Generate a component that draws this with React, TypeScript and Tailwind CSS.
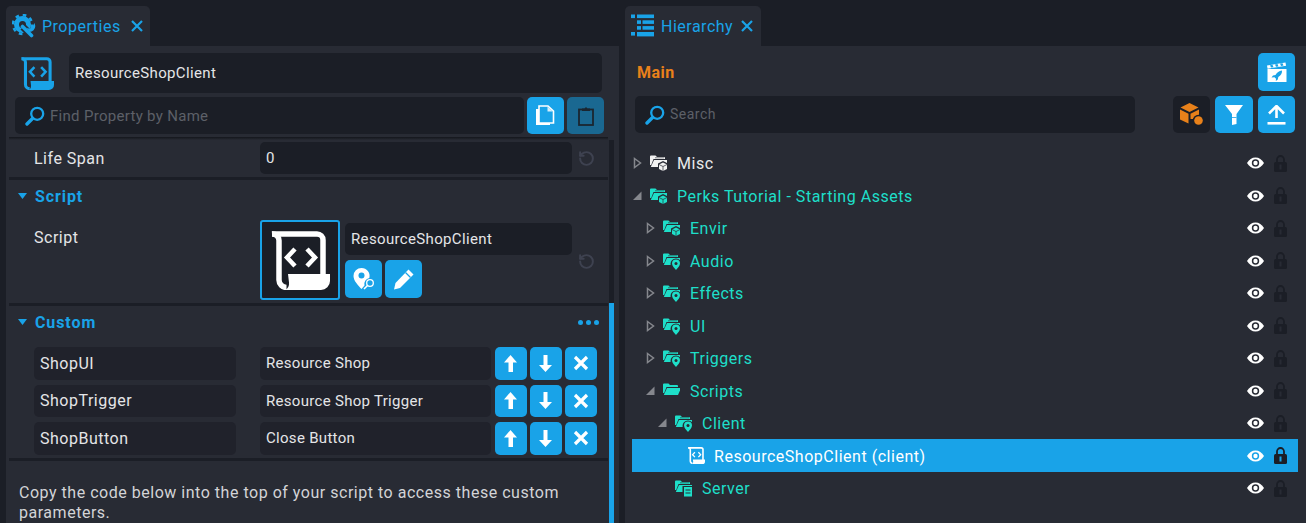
import { RotateCcw } from 'lucide-react';

const panel = '#282b34';

function GearWrench() {
  return (
    <svg width="24" height="24" viewBox="0 0 24 24" className="shrink-0">
      <circle cx="10.5" cy="10.5" r="6" fill="none" stroke="#19a3e8" strokeWidth="5" />
      <circle cx="10.5" cy="10.5" r="9.5" fill="none" stroke="#19a3e8" strokeWidth="2.6" strokeDasharray="3.6 3.85" />
      <path d="M11 13L20 22" stroke={panel} strokeWidth="7" />
      <path d="M10.5 12.5L19.5 21.5" stroke="#19a3e8" strokeWidth="3.6" strokeLinecap="round" />
      <path d="M14.5 13.5a4.5 4.5 0 0 0 6-1l2-3.5.8 3a6 6 0 0 1-6 6z" fill="#19a3e8" />
    </svg>
  );
}

function HierarchyIcon() {
  return (
    <svg width="24" height="24" viewBox="0 0 24 24" className="shrink-0" fill="#19a3e8">
      <rect x="0" y="0.5" width="4" height="3.6" />
      <rect x="6" y="0.5" width="17" height="3.6" />
      <rect x="6" y="6.3" width="4" height="3.6" />
      <rect x="11.5" y="6.3" width="11.5" height="3.6" />
      <rect x="6" y="12.1" width="4" height="3.6" />
      <rect x="11.5" y="12.1" width="11.5" height="3.6" />
      <rect x="0" y="18" width="4" height="3.6" />
      <rect x="6" y="18" width="17" height="4.4" />
    </svg>
  );
}

function CloseGlyph() {
  return (
    <svg width="12" height="12" viewBox="0 0 12 12" className="shrink-0">
      <path d="M1 1L11 11M11 1L1 11" stroke="#19a3e8" strokeWidth="2.2" />
    </svg>
  );
}

function Magnifier() {
  return (
    <svg width="20" height="20" viewBox="0 0 20 20" className="shrink-0">
      <circle cx="12.2" cy="7.8" r="6" fill="none" stroke="#19a3e8" strokeWidth="2.3" />
      <path d="M7.5 12.5L2 18" stroke="#19a3e8" strokeWidth="3.4" strokeLinecap="round" />
    </svg>
  );
}

function ScrollIcon({ size, color }: { size: number; color: string }) {
  return (
    <svg width={size} height={size} viewBox="0 0 59 59" className="shrink-0">
      <path d="M1 3H46a6 6 0 0 1 6 6V46" fill="none" stroke={color} strokeWidth="5.5" />
      <path d="M1 3a6.5 6.5 0 0 1 7 6.5V49a7.500 7.500 0 0 0 7.500 7.500" fill="none" stroke={color} strokeWidth="5.5" />
      <path d="M17 43H59V50a9 9 0 0 1-9 9H14a7.500 7.500 0 0 0 4-7.500z" fill={color} />
      <path d="M24 18L16 26.500L24 35M36 18L44 26.500L36 35" fill="none" stroke={color} strokeWidth="4.500" />
    </svg>
  );
}

function CopyIcon() {
  return (
    <svg width="19" height="22" viewBox="0 0 19 22">
      <path d="M0 4H3V18H14V20H0z" fill="#fff" />
      <path d="M3 1H12L17.500 6V18H3z" fill="#19a3e8" stroke="#fff" strokeWidth="1.600" />
      <path d="M11.500 1.500V6.500H17z" fill="#d6effb" />
    </svg>
  );
}

function ClipboardIcon() {
  return (
    <svg width="16" height="20" viewBox="0 0 16 20">
      <rect x="1" y="3.500" width="14" height="15.500" fill="none" stroke="#1b2630" strokeWidth="1.800" />
      <path d="M4 5V2.500H6.500L8 1l1.500 1.500H12V5z" fill="#1b2630" />
    </svg>
  );
}

function PinSearch() {
  return (
    <svg width="24" height="24" viewBox="0 0 24 24">
      <path d="M9.500 1A8 8 0 0 0 1.500 9c0 5 5 9.500 8 13 1-1.200 2-2.300 3-3.500a6 6 0 0 1 4.800-7.500A8 8 0 0 0 9.500 1z" fill="#fff" />
      <circle cx="9.500" cy="8.500" r="3" fill="#19a3e8" />
      <circle cx="18" cy="16" r="3.300" fill="none" stroke="#fff" strokeWidth="1.300" />
      <path d="M15.500 18.500L12 22" stroke="#fff" strokeWidth="1.600" />
    </svg>
  );
}

function PencilIcon() {
  return (
    <svg width="22" height="22" viewBox="0 0 22 22">
      <path d="M15.500 1.500l5 5L7 20l-6 1.500L2.500 15z" fill="#fff" />
      <path d="M12.500 4.500l5 5" stroke="#19a3e8" strokeWidth="1.200" />
    </svg>
  );
}

function UpArrow() {
  return (
    <svg width="13" height="17" viewBox="0 0 13 17" className="mr-[2px]">
      <path d="M6.500 0L13 7.500H9V17H4.500V7.500H0z" fill="#fff" />
    </svg>
  );
}

function DownArrow() {
  return (
    <svg width="13" height="17" viewBox="0 0 13 17" className="mr-[2px]">
      <path d="M4.500 0H8.500V10H13L6.500 17L0 10H4.500z" fill="#fff" />
    </svg>
  );
}

function XIcon() {
  return (
    <svg width="16" height="16" viewBox="0 0 16 16">
      <path d="M2 2L14 14M14 2L2 14" stroke="#fff" strokeWidth="3.200" />
    </svg>
  );
}

function ClapperRocket() {
  return (
    <svg width="20" height="20" viewBox="0 0 20 20">
      <path d="M0 3.500L18.500 .5l.6 3.200L.6 6.700z" fill="#fff" />
      <path d="M3 3.200l2.500-.4 1 2.400-2.500.4zM8 2.400l2.500-.4 1 2.400-2.500.4zM13 1.600l2.500-.4 1 2.400-2.500.4z" fill="#19a3e8" />
      <rect x="0.500" y="7" width="19" height="13" fill="#fff" />
      <path d="M15 8.500c-3 .2-5 2-6.500 4.500L6 13.500l-1.500 2 3-.2 1.500 1.500-.2 2.200 2-1.500.5-2.500c2.500-1.500 4-3.500 3.700-6.500z" fill="#19a3e8" />
    </svg>
  );
}

function BoxDot() {
  return (
    <svg width="24" height="24" viewBox="0 0 24 24">
      <path d="M9.500 0L18.500 4.500L9.500 9L.5 4.500z" fill="#e8811a" />
      <path d="M0 6.500L8.500 10.700V20.500L0 16.500z" fill="#e8811a" />
      <path d="M10.500 10.700L19 6.500V16H10.500z" fill="#e8811a" />
      <circle cx="18.500" cy="17.500" r="5.800" fill="#1b1e26" />
      <circle cx="18.500" cy="17.500" r="4.300" fill="#e8811a" />
    </svg>
  );
}

function FunnelIcon() {
  return (
    <svg width="18" height="20" viewBox="0 0 18 20">
      <path d="M0 0H18L11.500 9V19L7 20V9z" fill="#fff" />
      <path d="M7 12.500h4.500" stroke="#19a3e8" strokeWidth="0.800" />
    </svg>
  );
}

function UploadIcon() {
  return (
    <svg width="19" height="20" viewBox="0 0 19 20">
      <path d="M9.500 1V13M2 8.500L9.500 1L17 8.500" fill="none" stroke="#fff" strokeWidth="2.600" />
      <rect x="0.500" y="17" width="18" height="2.600" fill="#fff" />
    </svg>
  );
}

function EyeIcon({ bg }: { bg: string }) {
  return (
    <svg width="17" height="12" viewBox="0 0 17 12" className="shrink-0">
      <path d="M0 6C2 2.500 5 .5 8.500 .5S15 2.500 17 6c-2 3.500-5 5.500-8.500 5.500S2 9.500 0 6z" fill="#fff" />
      <circle cx="8.500" cy="6" r="3.700" fill={bg} />
      <circle cx="8.500" cy="6" r="2.200" fill="#fff" />
    </svg>
  );
}

function LockIcon({ active }: { active?: boolean }) {
  return (
    <svg width="13" height="17" viewBox="0 0 13 17" className="shrink-0">
      <path d="M3 7V4.500a3.500 3.500 0 0 1 7 0V7" fill="none" stroke="#1b1e26" strokeWidth="1.800" />
      <rect x="0" y="7" width="13" height="10" rx="1.500" fill="#1b1e26" />
      <rect x="5.500" y="9.500" width="2" height="5" fill={active ? '#19a3e8' : '#282b34'} />
    </svg>
  );
}

function FolderIcon({ color, badge, open }: { color: string; badge?: 'box' | 'pin' | 'server'; open?: boolean }) {
  return (
    <svg width="18" height="18" viewBox="0 0 18 18" className="shrink-0">
      <path d="M0 2.500a1 1 0 0 1 1-1h4.500l1.500 1.500h7a1 1 0 0 1 1 1V5H3.500L1.200 11H0z" fill={color} />
      <path d="M4 6H17V8.500L15 13H.8z" fill={color} />
      {open ? null : <path d="M5 3.800h9" stroke={panel} strokeWidth="0.600" />}
      {badge === 'box' && (
        <g>
          <path d="M13 7L18 9.500V16L13 18.500L8 16V9.500z" fill={panel} />
          <path d="M13 8.500L17 10.500V15L13 17L9 15V10.500z" fill={color} />
          <path d="M9 10.500L13 12.500L17 10.500M13 12.500V17" stroke={panel} strokeWidth="0.700" fill="none" />
        </g>
      )}
      {badge === 'pin' && (
        <g>
          <circle cx="13" cy="12" r="5.500" fill={panel} />
          <path d="M13 7.500a4 4 0 0 0-4 4c0 2.500 2.500 4.500 4 6.500 1.500-2 4-4 4-6.500a4 4 0 0 0-4-4z" fill={color} />
          <circle cx="13" cy="11.500" r="1.500" fill={panel} />
        </g>
      )}
      {badge === 'server' && (
        <g>
          <rect x="7.500" y="7" width="10.500" height="11" fill={panel} />
          <rect x="9" y="8" width="8" height="9.500" fill={color} />
          <path d="M10.500 11h5M10.500 14h5" stroke={panel} strokeWidth="1.100" />
        </g>
      )}
    </svg>
  );
}

function IconButton({ className, tone = 'bg-[#19a3e8]', children }: { className: string; tone?: string; children: React.ReactNode }) {
  return <div className={`flex items-center justify-center rounded-[5px] shrink-0 ${tone} ${className}`}>{children}</div>;
}

function Tab({ width, label, icon, closeGap }: { width: string; label: string; icon: React.ReactNode; closeGap: string }) {
  return (
    <div className={`flex items-center h-[40px] rounded-t-[5px] bg-[#282b34] pl-[6px] ${width}`}>
      {icon}
      <span className="ml-[6px] pt-[2px] text-[16px] tracking-[0.5px] text-[#19a3e8]">{label}</span>
      <span className={`flex ${closeGap}`}><CloseGlyph /></span>
    </div>
  );
}

function Divider() {
  return <div className="h-[3px] bg-[#1b1e26]" />;
}

function SectionHeader({ title, dots }: { title: string; dots?: boolean }) {
  return (
    <div className="flex items-center h-[32px] pl-[9px] pr-[9px]">
      <svg width="9" height="6" viewBox="0 0 9 6" className="shrink-0">
        <path d="M0 0H9L4.500 6z" fill="#19a3e8" />
      </svg>
      <span className="ml-[8px] pt-[2px] text-[16px] font-bold text-[#19a3e8] tracking-[0.9px]">{title}</span>
      {dots && (
        <div className="ml-auto flex gap-[3px]">
          <span className="size-[5px] rounded-full bg-[#19a3e8]" />
          <span className="size-[5px] rounded-full bg-[#19a3e8]" />
          <span className="size-[5px] rounded-full bg-[#19a3e8]" />
        </div>
      )}
    </div>
  );
}

function ResetIcon() {
  return <RotateCcw size={17} strokeWidth={2.8} className="text-[#3e4250] shrink-0" />;
}

const customRows = [
  { name: 'ShopUI', value: 'Resource Shop' },
  { name: 'ShopTrigger', value: 'Resource Shop Trigger' },
  { name: 'ShopButton', value: 'Close Button' },
];

function PropertiesPanel() {
  return (
    <div className="flex flex-col w-[613px] h-[477px] bg-[#282b34] shrink-0">
      <div className="flex items-center pl-[9px] pt-[7px]">
        <div className="w-[54px] flex pl-[6px]">
          <ScrollIcon size={33} color="#19a3e8" />
        </div>
        <div className="flex items-center w-[533px] h-[40px] rounded-[5px] bg-[#1b1e26] pl-[6px] text-[15px] tracking-[0.35px] text-[#e4e5e7]">
          ResourceShopClient
        </div>
      </div>
      <div className="flex mt-[4px] pl-[9px] gap-[3px]">
        <div className="flex items-center w-[509px] h-[37px] rounded-[5px] bg-[#1b1e26] pl-[10px] gap-[5px]">
          <Magnifier />
          <span className="pt-[2px] text-[15px] tracking-[0.3px] text-[#5d6068]">Find Property by Name</span>
        </div>
        <IconButton className="w-[37px] h-[37px]"><CopyIcon /></IconButton>
        <IconButton className="w-[37px] h-[37px]" tone="bg-[#1a6891]"><ClipboardIcon /></IconButton>
      </div>
      <div className="ml-[3px] w-[599px] h-[3px] mt-[3px] bg-gradient-to-b from-[#14161c] to-[#282b34]" />
      <div className="flex ml-[3px] flex-1 min-h-0 gap-[1px]">
        <div className="w-[599px] overflow-hidden">
          <div className="flex items-center pt-[2px]">
            <span className="w-[251px] pl-[25px] pt-[2px] text-[16px] tracking-[0.5px] text-[#e4e5e7]">Life Span</span>
            <div className="flex items-center w-[312px] h-[32px] rounded-[5px] bg-[#1b1e26] pl-[6px] text-[15px] text-[#e4e5e7]">0</div>
            <span className="ml-[6px] flex"><ResetIcon /></span>
          </div>
          <div className="mt-[3px]"><Divider /></div>
          <SectionHeader title="Script" />
          <div className="flex pt-[8px]">
            <span className="w-[251px] pl-[25px] pt-[6px] text-[16px] tracking-[0.5px] text-[#e4e5e7]">Script</span>
            <div className="flex items-center justify-center w-[80px] h-[80px] rounded-[3px] border-2 border-[#19a3e8] bg-[#1b1e26]">
              <ScrollIcon size={59} color="#fff" />
            </div>
            <div className="ml-[5px] pt-[3px]">
              <div className="flex items-center w-[227px] h-[32px] rounded-[5px] bg-[#1b1e26] pl-[6px] text-[15px] tracking-[0.35px] text-[#e4e5e7]">
                ResourceShopClient
              </div>
              <div className="flex gap-[3px] mt-[5px]">
                <IconButton className="w-[37px] h-[38px]"><PinSearch /></IconButton>
                <IconButton className="w-[37px] h-[38px]"><PencilIcon /></IconButton>
              </div>
            </div>
            <span className="ml-[6px] pt-[33px] flex"><ResetIcon /></span>
          </div>
          <div className="mt-[3px]"><Divider /></div>
          <SectionHeader title="Custom" dots />
          <div className="flex flex-col gap-[5px] pt-[9px] pl-[25px]">
            {customRows.map((row) => (
              <div key={row.name} className="flex h-[32.5px]">
                <div className="flex items-center w-[202px] rounded-[5px] bg-[#20222b] pl-[6px] pt-[1px] text-[16px] tracking-[0.5px] text-[#e4e5e7]">{row.name}</div>
                <div className="flex items-center ml-[24px] w-[231px] rounded-[5px] bg-[#20222b] pl-[6px] text-[15px] tracking-[0.3px] text-[#e4e5e7]">{row.value}</div>
                <div className="flex gap-[3px] ml-[4px]">
                  <IconButton className="w-[32px]"><UpArrow /></IconButton>
                  <IconButton className="w-[32px]"><DownArrow /></IconButton>
                  <IconButton className="w-[32px]"><XIcon /></IconButton>
                </div>
              </div>
            ))}
          </div>
          <div className="mt-[3px]"><Divider /></div>
          <p className="mt-[22px] pl-[10px] pr-[20px] text-[16px] leading-[20px] tracking-[0.52px] text-[#d3d4d7]">
            Copy the code below into the top of your script to access these custom parameters.
          </p>
        </div>
        <div className="w-[5px] h-full bg-[#1b1e26] flex flex-col">
          <div className="h-[163px]" />
          <div className="flex-1 bg-[#19a3e8]" />
        </div>
      </div>
    </div>
  );
}

type TreeRow = {
  label: string;
  depth: string;
  color: string;
  arrow?: 'open' | 'closed';
  badge?: 'box' | 'pin' | 'server';
  openFolder?: boolean;
  script?: boolean;
  selected?: boolean;
};

const teal = '#1edfc9';

const treeRows: TreeRow[] = [
  { label: 'Misc', depth: 'pl-[0px]', color: '#e9eaeb', arrow: 'closed', badge: 'box' },
  { label: 'Perks Tutorial - Starting Assets', depth: 'pl-[0px]', color: teal, arrow: 'open', badge: 'box' },
  { label: 'Envir', depth: 'pl-[13px]', color: teal, arrow: 'closed', badge: 'box' },
  { label: 'Audio', depth: 'pl-[13px]', color: teal, arrow: 'closed', badge: 'pin' },
  { label: 'Effects', depth: 'pl-[13px]', color: teal, arrow: 'closed', badge: 'pin' },
  { label: 'UI', depth: 'pl-[13px]', color: teal, arrow: 'closed', badge: 'pin' },
  { label: 'Triggers', depth: 'pl-[13px]', color: teal, arrow: 'closed', badge: 'pin' },
  { label: 'Scripts', depth: 'pl-[13px]', color: teal, arrow: 'open', openFolder: true },
  { label: 'Client', depth: 'pl-[25px]', color: teal, arrow: 'open', badge: 'pin' },
  { label: 'ResourceShopClient (client)', depth: 'pl-[38px]', color: '#fff', script: true, selected: true },
  { label: 'Server', depth: 'pl-[25px]', color: teal, badge: 'server' },
];

function TreeArrow({ kind }: { kind?: 'open' | 'closed' }) {
  if (kind === 'closed') {
    return (
      <svg width="11" height="12" viewBox="0 0 11 12" className="shrink-0">
        <path d="M2.500 1.500L8.500 6L2.500 10.500z" fill="none" stroke="#85878d" strokeWidth="1.500" />
      </svg>
    );
  }
  if (kind === 'open') {
    return (
      <svg width="11" height="12" viewBox="0 0 11 12" className="shrink-0">
        <path d="M9.500 1.500V10H1z" fill="#85878d" />
      </svg>
    );
  }
  return <span className="w-[11px] shrink-0" />;
}

function HierarchyPanel() {
  return (
    <div className="flex flex-col w-[681px] h-[477px] bg-[#282b34]">
      <div className="flex items-start justify-between pt-[7px] pl-[12px] pr-[11px]">
        <span className="mt-[9px] pt-[1px] text-[16px] leading-[20px] font-bold tracking-[0.5px] text-[#e8811a]">Main</span>
        <IconButton className="w-[37px] h-[38px]"><ClapperRocket /></IconButton>
      </div>
      <div className="flex items-center mt-[5px] pl-[10px] pr-[11px]">
        <div className="flex items-center w-[500px] h-[37px] rounded-[5px] bg-[#1b1e26] pl-[10px] gap-[5px]">
          <Magnifier />
          <span className="text-[14px] tracking-[0.5px] text-[#5d6068]">Search</span>
        </div>
        <IconButton className="ml-[38px] w-[37px] h-[37px]" tone="bg-[#1b1e26]"><BoxDot /></IconButton>
        <IconButton className="ml-[5px] w-[38px] h-[37px]"><FunnelIcon /></IconButton>
        <IconButton className="ml-[5px] w-[37px] h-[37px]"><UploadIcon /></IconButton>
      </div>
      <div className="flex flex-col mt-[13.75px] ml-[7px] w-[666px]">
        {treeRows.map((row) => (
          <div
            key={row.label}
            className={`flex items-center h-[32.5px] pr-[11px] ${row.depth} ${row.selected ? 'bg-[#19a3e8]' : ''}`}
          >
            <TreeArrow kind={row.arrow} />
            <span className="ml-[7px] flex">
              {row.script ? (
                <ScrollIcon size={17} color="#fff" />
              ) : (
                <FolderIcon color={row.label === 'Misc' ? '#f2f2f2' : teal} badge={row.badge} open={row.openFolder} />
              )}
            </span>
            <span className="ml-[9px] pt-[2px] text-[16px] tracking-[0.52px]" style={{ color: row.color }}>
              {row.label}
            </span>
            <div className="ml-auto flex items-center gap-[10px]">
              <EyeIcon bg={row.selected ? '#19a3e8' : panel} />
              <LockIcon active={row.selected} />
            </div>
          </div>
        ))}
      </div>
    </div>
  );
}

export default function App() {
  return (
    <div className="w-[1306px] h-[523px] overflow-hidden bg-[#1b1e26] font-['Roboto',sans-serif]">
      <div className="flex pt-[6px] pl-[6px] gap-[6px]">
        <div className="flex flex-col">
          <Tab width="w-[144px]" label="Properties" closeGap="ml-[10px]" icon={<GearWrench />} />
          <PropertiesPanel />
        </div>
        <div className="flex flex-col">
          <Tab width="w-[136px]" label="Hierarchy" closeGap="ml-[8px]" icon={<HierarchyIcon />} />
          <HierarchyPanel />
        </div>
      </div>
    </div>
  );
}
